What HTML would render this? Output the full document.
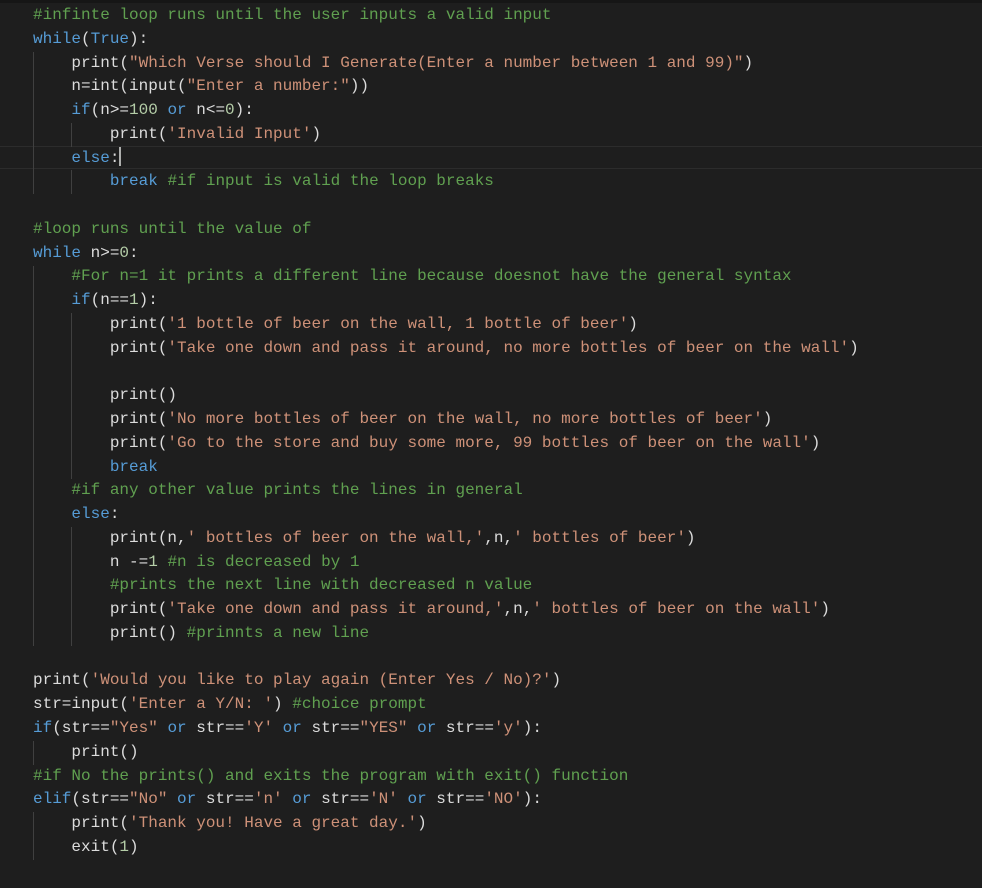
<!DOCTYPE html>
<html><head><meta charset="utf-8"><style>
html,body{margin:0;padding:0;background:#1e1e1e;width:982px;height:888px;overflow:hidden;position:relative}
.top{position:absolute;left:0;top:0;width:982px;height:3px;background:#161616}
.cur{position:absolute;left:0;top:145.6px;width:982px;height:21.8px;border-top:1px solid #2c2c2c;border-bottom:1px solid #2c2c2c}
pre{position:absolute;left:33px;top:4px;margin:0;font-family:"Liberation Mono",monospace;font-size:16px;line-height:23.77px;color:#dcdcdc;white-space:pre}
.k{color:#569cd6}.s{color:#ce9178}.c{color:#60a050}.n{color:#b5cea8}
.g{position:absolute;width:1px;background:#404040}
.caret{display:inline-block;width:2px;height:19px;background:#aeafad;vertical-align:-4px}
</style></head><body>
<div class="top"></div>
<div class="cur"></div>
<div class="g" style="left:33px;top:51.5px;height:142.6px"></div>
<div class="g" style="left:71px;top:122.8px;height:23.8px"></div>
<div class="g" style="left:71px;top:170.4px;height:23.8px"></div>
<div class="g" style="left:33px;top:265.5px;height:380.3px"></div>
<div class="g" style="left:71px;top:313px;height:166.4px"></div>
<div class="g" style="left:71px;top:527px;height:118.8px"></div>
<div class="g" style="left:33px;top:740.9px;height:23.8px"></div>
<div class="g" style="left:33px;top:812.2px;height:47.5px"></div>
<pre><span class="c">#infinte loop runs until the user inputs a valid input</span>
<span class="k">while</span>(<span class="k">True</span>):
    print(<span class="s">"Which Verse should I Generate(Enter a number between 1 and 99)"</span>)
    n=int(input(<span class="s">"Enter a number:"</span>))
    <span class="k">if</span>(n&gt;=<span class="n">100</span> <span class="k">or</span> n&lt;=<span class="n">0</span>):
        print(<span class="s">'Invalid Input'</span>)
    <span class="k">else</span>:<span class="caret"></span>
        <span class="k">break</span> <span class="c">#if input is valid the loop breaks</span>

<span class="c">#loop runs until the value of</span>
<span class="k">while</span> n&gt;=<span class="n">0</span>:
    <span class="c">#For n=1 it prints a different line because doesnot have the general syntax</span>
    <span class="k">if</span>(n==<span class="n">1</span>):
        print(<span class="s">'1 bottle of beer on the wall, 1 bottle of beer'</span>)
        print(<span class="s">'Take one down and pass it around, no more bottles of beer on the wall'</span>)

        print()
        print(<span class="s">'No more bottles of beer on the wall, no more bottles of beer'</span>)
        print(<span class="s">'Go to the store and buy some more, 99 bottles of beer on the wall'</span>)
        <span class="k">break</span>
    <span class="c">#if any other value prints the lines in general</span>
    <span class="k">else</span>:
        print(n,<span class="s">' bottles of beer on the wall,'</span>,n,<span class="s">' bottles of beer'</span>)
        n -=<span class="n">1</span> <span class="c">#n is decreased by 1</span>
        <span class="c">#prints the next line with decreased n value</span>
        print(<span class="s">'Take one down and pass it around,'</span>,n,<span class="s">' bottles of beer on the wall'</span>)
        print() <span class="c">#prinnts a new line</span>

print(<span class="s">'Would you like to play again (Enter Yes / No)?'</span>)
str=input(<span class="s">'Enter a Y/N: '</span>) <span class="c">#choice prompt</span>
<span class="k">if</span>(str==<span class="s">"Yes"</span> <span class="k">or</span> str==<span class="s">'Y'</span> <span class="k">or</span> str==<span class="s">"YES"</span> <span class="k">or</span> str==<span class="s">'y'</span>):
    print()
<span class="c">#if No the prints() and exits the program with exit() function</span>
<span class="k">elif</span>(str==<span class="s">"No"</span> <span class="k">or</span> str==<span class="s">'n'</span> <span class="k">or</span> str==<span class="s">'N'</span> <span class="k">or</span> str==<span class="s">'NO'</span>):
    print(<span class="s">'Thank you! Have a great day.'</span>)
    exit(<span class="n">1</span>)</pre>
</body></html>
